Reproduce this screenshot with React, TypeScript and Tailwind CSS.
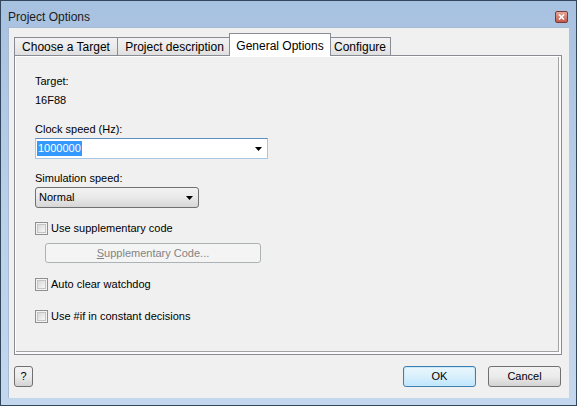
import React from 'react';

const font = { fontFamily: '"Liberation Sans", Arial, sans-serif' };

const Checkbox = ({ label }: { label: string }) => (
    <div className="flex items-center h-[13px]">
        <span className="w-[13px] h-[13px] border border-[#8e8f8f] bg-[#f4f4f4] p-[1px] shrink-0">
            <span className="block w-full h-full border border-[#c4c4c4] bg-gradient-to-br from-[#d8d8d8] to-[#f7f7f7]" />
        </span>
        <span className="ml-[3px] text-[11px] leading-[13px] text-black">{label}</span>
    </div>
);

const Arrow = () => (
    <svg width="7" height="4" viewBox="0 0 7 4" className="shrink-0">
        <path d="M0 0H7L3.5 4Z" fill="#000" />
    </svg>
);

const App = () => {
    const tabs = [
        { label: 'Choose a Target', w: 'w-[104px]' },
        { label: 'Project description', w: 'w-[115px]' },
        { label: 'General Options', w: 'w-[102px]', active: true },
        { label: 'Configure', w: 'w-[62px]' },
    ];

    return (
        <div style={font} className="w-[577px] h-[406px] border border-[#32465c] bg-gradient-to-b from-[#a7c1e0] via-[#bad0e9] to-[#c3d8ee] flex flex-col overflow-hidden">
            {/* title bar */}
            <div className="h-[26px] flex items-center justify-between pl-[7px] pr-[8px]">
                <span className="text-[12px] text-[#1b1b1b] mt-[5px]">Project Options</span>
                <span className="w-[13px] h-[12px] mt-[5px] rounded-[2px] border border-[#7d3a30] bg-gradient-to-b from-[#e6a89c] to-[#c0584a] flex items-center justify-center">
                    <svg width="7" height="6" viewBox="0 0 7 6">
                        <path d="M1 0.5L6 5.5M6 0.5L1 5.5" stroke="#fff" strokeWidth="1.6" />
                    </svg>
                </span>
            </div>

            {/* client */}
            <div className="flex-1 mx-[7px] mb-[7px] bg-[#f0f0f0] border-l border-t border-[#a7bbd2] flex flex-col">
                {/* tabs */}
                <div className="flex items-end h-[22px] mt-[5px] pl-[5px] relative z-10">
                    {tabs.map(t =>
                        t.active ? (
                            <div key={t.label} className={`${t.w} h-[23px] -mx-[2px] -mb-[1px] bg-white border border-b-0 border-[#898c95] flex items-start justify-center pt-[3px] text-[12px] text-black relative z-10`}>
                                {t.label}
                            </div>
                        ) : (
                            <div key={t.label} className={`${t.w} h-[18px] -mr-px border border-b-0 border-[#898c95] bg-gradient-to-b from-[#f2f2f2] via-[#ebebeb] to-[#dfdfdf] flex items-center justify-center text-[12px] text-black pt-[1px]`}>
                                {t.label}
                            </div>
                        )
                    )}
                </div>

                {/* panel */}
                <div className="ml-[5px] mr-[7px] h-[300px] border border-[#898c95] bg-[#f0f0f0] shadow-[inset_1px_1px_0_#ffffff,inset_-2px_-2px_0_#fbfbfb,inset_-3px_-3px_0_#a3a3a3] pl-[20px] pt-[19px] flex flex-col items-start">
                    <div className="text-[11px] leading-[13px] text-black">Target:</div>
                    <div className="mt-[6px] text-[11px] leading-[13px] text-black">16F88</div>
                    <div className="mt-[16px] text-[11px] leading-[13px] text-black">Clock speed (Hz):</div>
                    <div className="mt-[2px] w-[233px] h-[21px] bg-white border border-[#a9c6e4] border-t-[#5f8fc0] flex items-center pl-[1px] pr-[5px] justify-between">
                        <span className="bg-[#3399ff] text-white text-[11px] leading-[15px] px-[1px]">1000000</span>
                        <Arrow />
                    </div>
                    <div className="mt-[13px] text-[11px] leading-[13px] text-black">Simulation speed:</div>
                    <div className="mt-[2px] w-[164px] h-[21px] rounded-[3px] border border-[#707070] bg-gradient-to-b from-[#f3f3f3] via-[#e9e9e9] to-[#d6d6d6] flex items-center justify-between pl-[3px] pr-[5px]">
                        <span className="text-[11px] leading-[13px] text-black">Normal</span>
                        <Arrow />
                    </div>
                    <div className="mt-[14px]">
                        <Checkbox label="Use supplementary code" />
                    </div>
                    <div className="mt-[8px] ml-[10px] w-[216px] h-[20px] rounded-[3px] border border-[#adb2b5] bg-[#f4f4f4] flex items-center justify-center text-[11px] text-[#838383]">
                        <span><span className="underline">S</span>upplementary Code...</span>
                    </div>
                    <div className="mt-[15px]">
                        <Checkbox label="Auto clear watchdog" />
                    </div>
                    <div className="mt-[19px]">
                        <Checkbox label="Use #if in constant decisions" />
                    </div>
                </div>

                {/* buttons */}
                <div className="flex items-center justify-between pl-[5px] pr-[8px] mt-[11px]">
                    <button className="w-[19px] h-[21px] rounded-[3px] border border-[#707070] bg-gradient-to-b from-[#f2f2f2] via-[#ebebeb] to-[#d3d3d3] text-[11px] text-black flex items-center justify-center">?</button>
                    <div className="flex gap-[12px]">
                        <button className="w-[73px] h-[21px] rounded-[3px] border border-[#3c7fb1] bg-gradient-to-b from-[#eaf6fd] via-[#d9f0fc] to-[#bee6fd] shadow-[inset_0_0_0_1px_#cbe7f8] text-[11px] text-black flex items-center justify-center">OK</button>
                        <button className="w-[73px] h-[21px] rounded-[3px] border border-[#707070] bg-gradient-to-b from-[#f2f2f2] via-[#ebebeb] to-[#d3d3d3] text-[11px] text-black flex items-center justify-center">Cancel</button>
                    </div>
                </div>
            </div>
        </div>
    );
};

export default App;
